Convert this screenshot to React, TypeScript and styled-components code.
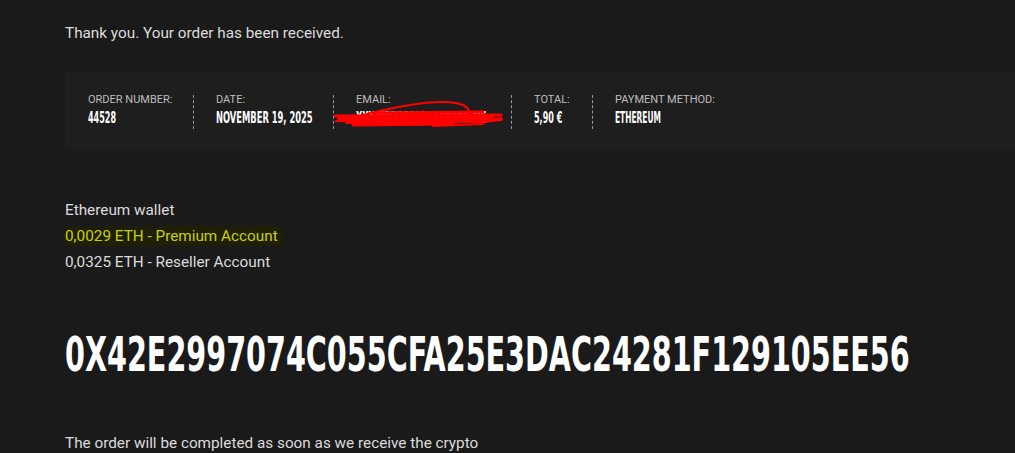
import React from "react";
import styled, { createGlobalStyle } from "styled-components";

const Global = createGlobalStyle`
  html, body { margin: 0; padding: 0; background: #1a1a1a; }
  body { font-family: Roboto, "Noto Sans", "Liberation Sans", sans-serif; overflow: hidden; }
`;

const Page = styled.div`
  width: 1015px;
  height: 453px;
  overflow: hidden;
  padding: 23px 0 0 65px;
  box-sizing: border-box;
  color: #dcdcdc;
  font-size: 15.3px;
`;

const Text = styled.p`
  margin: 0;
  line-height: 20px;
  font-size: 15.3px;
  color: #dcdcdc;
`;

const Overview = styled.ul`
  list-style: none;
  margin: 30px 0 0 0;
  padding: 0;
  height: 77px;
  width: 1100px;
  background: #1e1e1e;
  display: flex;
  align-items: center;
`;

const Item = styled.li<{ $w: number; $last?: boolean }>`
  position: relative;
  padding: 0 22px 0 22px;
  border-right: ${(p) => (p.$last ? "none" : "1px dashed #9a9a9a")};
  height: 34px;
  margin-top: 1px;
  &:first-child { padding-left: 23px; }
  & > div { width: ${(p) => p.$w}px; }
`;

const Label = styled.div`
  font-size: 11px;
  line-height: 12px;
  text-transform: uppercase;
  color: #bdbdbd;
  white-space: nowrap;
  margin-top: -1px;
`;

const Value = styled.div<{ $sx: number }>`
  font-family: "DejaVu Sans Condensed", "Liberation Sans", sans-serif;
  font-weight: 700;
  font-size: 16px;
  line-height: 16px;
  margin-top: 4px;
  color: #ffffff;
  white-space: nowrap;
  text-transform: uppercase;
  transform: scaleX(${(p) => p.$sx});
  transform-origin: left center;
`;

const Scribble = styled.svg`
  position: absolute;
  left: -1px;
  top: 2px;
  width: 170px;
  height: 34px;
  pointer-events: none;
`;

const Wallet = styled.div`
  margin-top: 50px;
  display: flex;
  flex-direction: column;
  gap: 6px;
`;

const Highlight = styled.span`
  align-self: flex-start;
  background: #1f1f06;
  color: #c8d20a;
  font-size: 15.3px;
  line-height: 20px;
  padding: 0 5px 0 0;
`;

const Address = styled.h2`
  margin: 54px 0 0 0;
  font-family: "DejaVu Sans Condensed", "Liberation Sans", sans-serif;
  font-weight: 700;
  font-size: 48px;
  line-height: 56px;
  color: #ffffff;
  white-space: nowrap;
  transform: scaleX(0.663);
  transform-origin: left center;
`;

const Footer = styled(Text)`
  margin-top: 51px;
`;

export default function App() {
  return (
    <>
      <Global />
      <Page>
        <Text>Thank you. Your order has been received.</Text>
        <Overview>
          <Item $w={83}>
            <div>
              <Label>Order number:</Label>
              <Value $sx={0.56}>44528</Value>
            </div>
          </Item>
          <Item $w={95}>
            <div>
              <Label>Date:</Label>
              <Value $sx={0.58}>November 19, 2025</Value>
            </div>
          </Item>
          <Item $w={133}>
            <div>
              <Label>Email:</Label>
              <Value $sx={0.56}>xxxxxxxxxx@xxxxxxx.me</Value>
            </div>
            <Scribble viewBox="0 0 170 34">
              <g fill="none" stroke="#ff0000" strokeLinecap="round">
                <path d="M30 18 C 60 10, 110 0, 130 8 C 138 12, 136 16, 134 18" strokeWidth="2" />
                <path d="M2 19 L 168 18" strokeWidth="3" />
                <path d="M6 22 L 160 21" strokeWidth="4" />
                <path d="M14 25 L 150 24 L 168 22" strokeWidth="4" />
                <path d="M20 28 L 120 27" strokeWidth="3" />
                <path d="M40 16 L 150 15" strokeWidth="3" />
                <path d="M3 24 L 60 26" strokeWidth="2" />
                <path d="M100 29 L 150 27" strokeWidth="2" />
              </g>
            </Scribble>
          </Item>
          <Item $w={36}>
            <div>
              <Label>Total:</Label>
              <Value $sx={0.56}>5,90 €</Value>
            </div>
          </Item>
          <Item $w={120} $last>
            <div>
              <Label>Payment method:</Label>
              <Value $sx={0.52}>Ethereum</Value>
            </div>
          </Item>
        </Overview>
        <Wallet>
          <Text>Ethereum wallet</Text>
          <Highlight>0,0029 ETH - Premium Account</Highlight>
          <Text>0,0325 ETH - Reseller Account</Text>
        </Wallet>
        <Address>0X42E2997074C055CFA25E3DAC24281F129105EE56</Address>
        <Footer>The order will be completed as soon as we receive the crypto</Footer>
      </Page>
    </>
  );
}
